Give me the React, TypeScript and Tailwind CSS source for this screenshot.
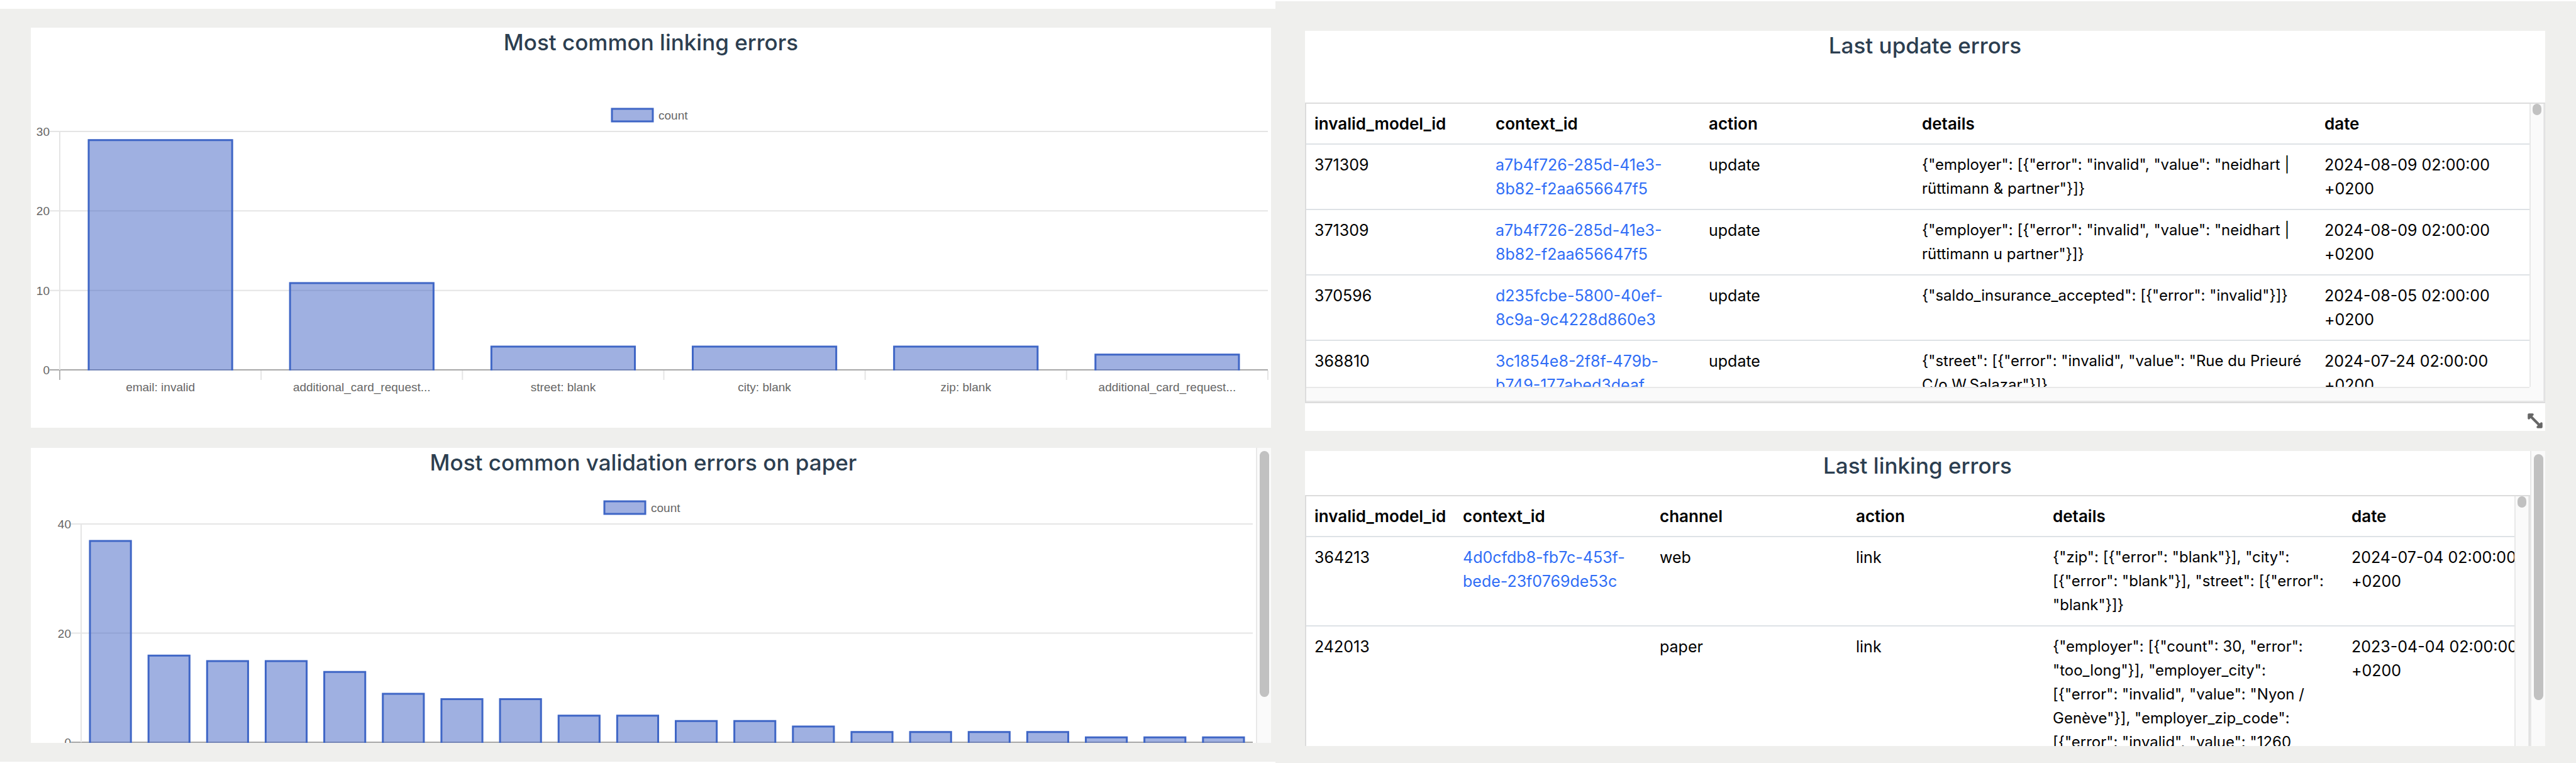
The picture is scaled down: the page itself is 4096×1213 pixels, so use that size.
import type { ReactNode } from "react";

type Bar = { label: string; value: number };

type Geometry = {
  width: number;
  height: number;
  left: number;
  right: number;
  top: number;
  bottom: number;
  tick: number;
  legendX: number;
  legendY: number;
  barInset: number;
};

const linkingErrors: Bar[] = [
  { label: "email: invalid", value: 29 },
  { label: "additional_card_request...", value: 11 },
  { label: "street: blank", value: 3 },
  { label: "city: blank", value: 3 },
  { label: "zip: blank", value: 3 },
  { label: "additional_card_request...", value: 2 },
];

const paperErrors: Bar[] = [37, 16, 15, 15, 13, 9, 8, 8, 5, 5, 4, 4, 3, 2, 2, 2, 2, 1, 1, 1].map(
  (value) => ({ label: "", value }),
);

function BarChart({ bars, ticks, g, name }: { bars: Bar[]; ticks: number[]; g: Geometry; name: string }) {
  const max = Math.max(...ticks);
  const step = (g.right - g.left) / bars.length;
  const y = (v: number) => g.bottom - (v / max) * (g.bottom - g.top);

  return (
    <svg
      viewBox={`0 0 ${g.width} ${g.height}`}
      role="img"
      aria-label={name}
      className="block h-auto w-full font-['Liberation_Sans',Arial,sans-serif] text-[19px]"
    >
      <rect x={g.legendX + 1} y={g.legendY + 1} width={65} height={20} fill="#a0b0e1" stroke="#3f66c6" strokeWidth={3} />
      <text x={g.legendX + 75} y={g.legendY + 18} fill="#666">
        count
      </text>

      {ticks.map((t) => (
        <g key={t}>
          <line x1={g.left - g.tick} x2={g.right} y1={y(t)} y2={y(t)} stroke={t === 0 ? "#a8a8a8" : "#e5e5e5"} strokeWidth={2} />
          <text x={g.left - g.tick} y={y(t) + 7} textAnchor="end" fill="#666">
            {t}
          </text>
        </g>
      ))}

      <line x1={g.left} x2={g.left} y1={g.top} y2={g.bottom} stroke="#e5e5e5" strokeWidth={2} />
      {Array.from({ length: bars.length + 1 }, (_, i) => (
        <line
          key={i}
          x1={g.left + i * step}
          x2={g.left + i * step}
          y1={g.bottom + 1}
          y2={g.bottom + 16}
          stroke={i === 0 ? "#b4b4b4" : "#e5e5e5"}
          strokeWidth={2}
        />
      ))}

      {bars.map((bar, i) => {
        const x1 = g.left + i * step + g.barInset;
        const x2 = g.left + (i + 1) * step - g.barInset;
        const top = y(bar.value);
        return (
          <g key={i}>
            <rect x={x1} y={top} width={x2 - x1} height={g.bottom - top + 1} fill="#4062c4" fillOpacity={0.5} />
            <path
              d={`M${x1 + 1} ${g.bottom + 1}V${top + 1}H${x2 - 1}V${g.bottom + 1}`}
              fill="none"
              stroke="#3f66c6"
              strokeWidth={3}
            />
            {bar.label && (
              <text x={(x1 + x2) / 2} y={g.bottom + 34} textAnchor="middle" fill="#666">
                {bar.label}
              </text>
            )}
          </g>
        );
      })}
    </svg>
  );
}

function Title({ children }: { children: ReactNode }) {
  return <h2 className="text-center text-[35px] leading-[46px] font-medium text-[#2c3e50]">{children}</h2>;
}

function PanelScrollbar() {
  return (
    <div className="w-6 shrink-0 border-l-2 border-[#e8e8e8] bg-[#fafafa] pt-[5px]">
      <div className="mx-auto h-[391px] w-[15px] rounded-full bg-[#c1c1c1]" />
    </div>
  );
}

function TableScrollbar() {
  return (
    <div className="w-6 shrink-0 border-x-2 border-[#e8e8e8] bg-[#fafafa]">
      <div className="mx-auto h-[18px] w-[14px] rounded-full bg-[#c1c1c1]" />
    </div>
  );
}

type Column = { name: string; width: string };

function ErrorTable({ columns, rows }: { columns: Column[]; rows: string[][] }) {
  return (
    <div className="min-w-0 flex-1 overflow-hidden">
      <table className="w-full table-fixed border-collapse text-left text-black">
        <colgroup>
          {columns.map((c) => (
            <col key={c.name} className={c.width} />
          ))}
        </colgroup>
        <thead>
          <tr className="border-b-2 border-[#dee2e6]">
            {columns.map((c) => (
              <th key={c.name} scope="col" className="pt-[13px] pb-3 pl-[13px] text-[26px] leading-[38px] font-semibold">
                {c.name}
              </th>
            ))}
          </tr>
        </thead>
        <tbody>
          {rows.map((row, r) => (
            <tr key={r} className="border-b-2 border-[#dee2e6] align-top">
              {row.map((cell, i) => {
                const column = columns[i].name;
                return (
                  <td
                    key={column}
                    className={`px-[13px] py-[13px] leading-[38px] whitespace-pre-line ${
                      column === "details" ? "text-[24px]" : "text-[25px]"
                    }`}
                  >
                    {column === "context_id" && cell ? (
                      <a href={`#${cell}`} className="text-[#2f6df6]">
                        {cell}
                      </a>
                    ) : (
                      cell
                    )}
                  </td>
                );
              })}
            </tr>
          ))}
        </tbody>
      </table>
    </div>
  );
}

const updateColumns: Column[] = [
  { name: "invalid_model_id", width: "w-[288px]" },
  { name: "context_id", width: "w-[339px]" },
  { name: "action", width: "w-[339px]" },
  { name: "details", width: "w-[640px]" },
  { name: "date", width: "w-[339px]" },
];

const updateRows = [
  ["371309", "a7b4f726-285d-41e3-8b82-f2aa656647f5", "update", '{"employer": [{"error": "invalid", "value": "neidhart | rüttimann & partner"}]}', "2024-08-09 02:00:00 +0200"],
  ["371309", "a7b4f726-285d-41e3-8b82-f2aa656647f5", "update", '{"employer": [{"error": "invalid", "value": "neidhart | rüttimann u partner"}]}', "2024-08-09 02:00:00 +0200"],
  ["370596", "d235fcbe-5800-40ef-8c9a-9c4228d860e3", "update", '{"saldo_insurance_accepted": [{"error": "invalid"}]}', "2024-08-05 02:00:00 +0200"],
  ["368810", "3c1854e8-2f8f-479b-b749-177abed3deaf", "update", '{"street": [{"error": "invalid", "value": "Rue du Prieuré C/o W.Salazar"}]}', "2024-07-24 02:00:00 +0200"],
];

const linkColumns: Column[] = [
  { name: "invalid_model_id", width: "w-[236px]" },
  { name: "context_id", width: "w-[313px]" },
  { name: "channel", width: "w-[312px]" },
  { name: "action", width: "w-[313px]" },
  { name: "details", width: "w-[475px]" },
  { name: "date", width: "w-[313px]" },
];

const linkRows = [
  ["364213", "4d0cfdb8-fb7c-453f-bede-23f0769de53c", "web", "link", '{"zip": [{"error": "blank"}], "city":\n[{"error": "blank"}], "street": [{"error":\n"blank"}]}', "2024-07-04 02:00:00 +0200"],
  ["242013", "", "paper", "link", '{"employer": [{"count": 30, "error":\n"too_long"}], "employer_city":\n[{"error": "invalid", "value": "Nyon /\nGenève"}], "employer_zip_code":\n[{"error": "invalid", "value": "1260', "2023-04-04 02:00:00 +0200"],
];

function ResizeIcon() {
  return (
    <svg viewBox="0 0 24 24" className="size-6" fill="#666" stroke="#666" strokeLinejoin="round" aria-hidden="true">
      <path d="M2 2H8L2 8Z" strokeWidth={3.5} />
      <path d="M22 22H16L22 16Z" strokeWidth={3.5} />
      <path d="M4 4L20 20" strokeWidth={4} />
    </svg>
  );
}

export default function App() {
  return (
    <main className="grid min-h-screen grid-cols-[2028fr_2068fr] bg-white font-[Inter,sans-serif]">
      <div className="mt-[14px] mb-[2px] flex min-w-0 flex-col gap-8 bg-[#efefed] pt-[30px] pr-[7px] pl-[49px]">
        <section className="h-[636px] overflow-hidden bg-white">
          <Title>Most common linking errors</Title>
          <BarChart
            name="Most common linking errors"
            bars={linkingErrors}
            ticks={[0, 10, 20, 30]}
            g={{ width: 1972, height: 590, left: 46, right: 1967, top: 119, bottom: 498, tick: 16, legendX: 923, legendY: 82, barInset: 45 }}
          />
        </section>
        <section className="flex h-[469px] overflow-hidden bg-white">
          <div className="min-w-0 flex-1">
            <Title>Most common validation errors on paper</Title>
            <BarChart
              name="Most common validation errors on paper"
              bars={paperErrors}
              ticks={[0, 20, 40]}
              g={{ width: 1948, height: 580, left: 80, right: 1943, top: 75, bottom: 422, tick: 16, legendX: 911, legendY: 38, barInset: 13 }}
            />
          </div>
          <PanelScrollbar />
        </section>
      </div>

      <div className="mt-[2px] flex min-w-0 flex-col gap-8 bg-[#efefed] pt-[47px] pr-[49px] pl-[47px]">
        <section className="h-[636px] overflow-hidden bg-white">
          <Title>Last update errors</Title>
          <div className="mt-[68px] flex h-[478px] flex-col border-2 border-r border-[#dcdcdc]">
            <div className="flex min-h-0 flex-1">
              <ErrorTable columns={updateColumns} rows={updateRows} />
              <TableScrollbar />
            </div>
            <div className="flex h-6">
              <div className="flex-1 border-y-2 border-[#e8e8e8] bg-[#fafafa]" />
              <div className="w-6 border-r-2 border-b-2 border-[#e8e8e8] bg-[#fafafa]" />
            </div>
          </div>
          <div className="flex justify-end pt-4 pr-1">
            <button type="button" aria-label="Resize panel" className="size-6">
              <ResizeIcon />
            </button>
          </div>
        </section>
        <section className="flex h-[469px] overflow-hidden bg-white">
          <div className="flex min-w-0 flex-1 flex-col">
            <Title>Last linking errors</Title>
            <div className="mt-6 flex min-h-0 flex-1 border-t-2 border-r border-l-2 border-[#dcdcdc]">
              <ErrorTable columns={linkColumns} rows={linkRows} />
              <TableScrollbar />
            </div>
          </div>
          <PanelScrollbar />
        </section>
      </div>
    </main>
  );
}
